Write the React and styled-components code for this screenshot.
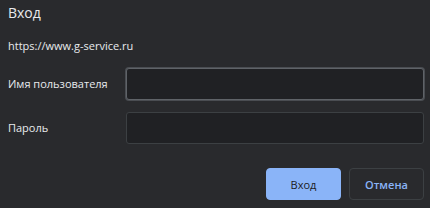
import React from 'react';
import styled, { createGlobalStyle } from 'styled-components';

const GlobalStyle = createGlobalStyle`
  html, body {
    margin: 0;
    padding: 0;
    background: #292a2d;
  }
`;

const Dialog = styled.div`
  width: 430px;
  height: 208px;
  box-sizing: border-box;
  padding: 3px 6px 0 8px;
  background-color: #292a2d;
  color: #e8eaed;
  font-family: 'Open Sans', 'Noto Sans', sans-serif;
  display: flex;
  flex-direction: column;
`;

const Title = styled.div`
  font-size: 14px;
  line-height: 20px;
  height: 20px;
`;

const Url = styled.div`
  font-size: 11px;
  line-height: 16px;
  margin-top: 15px;
`;

const Form = styled.div`
  display: grid;
  grid-template-columns: 118px 1fr;
  row-gap: 12px;
  align-items: center;
  margin-top: 14px;
`;

const Label = styled.label`
  font-size: 11px;
  line-height: 16px;
`;

const Input = styled.div`
  height: 32px;
  box-sizing: border-box;
  background-color: #202124;
  border: 1px solid ${p => (p.$focused ? '#5f6368' : '#3c4043')};
  border-radius: 3px;
  ${p => p.$focused && 'box-shadow: 0 0 0 1px #4a4d52;'}
`;

const Actions = styled.div`
  display: flex;
  justify-content: flex-end;
  gap: 8px;
  margin-top: 24px;
`;

const Button = styled.button`
  width: 75px;
  height: 32px;
  box-sizing: border-box;
  border-radius: 4px;
  font-family: 'Open Sans', 'Noto Sans', sans-serif;
  font-size: 11px;
  cursor: pointer;
  background-color: ${p => (p.$primary ? '#8ab4f8' : 'transparent')};
  color: ${p => (p.$primary ? '#202124' : '#8ab4f8')};
  border: 1px solid ${p => (p.$primary ? '#8ab4f8' : '#3c4043')};
  font-weight: ${p => (p.$primary ? 400 : 600)};
`;

const App = () => {
  return (
    <>
      <GlobalStyle />
      <Dialog>
        <Title>Вход</Title>
        <Url>https://www.g-service.ru</Url>
        <Form>
          <Label>Имя пользователя</Label>
          <Input $focused />
          <Label>Пароль</Label>
          <Input />
        </Form>
        <Actions>
          <Button $primary>Вход</Button>
          <Button>Отмена</Button>
        </Actions>
      </Dialog>
    </>
  );
};

export default App;
